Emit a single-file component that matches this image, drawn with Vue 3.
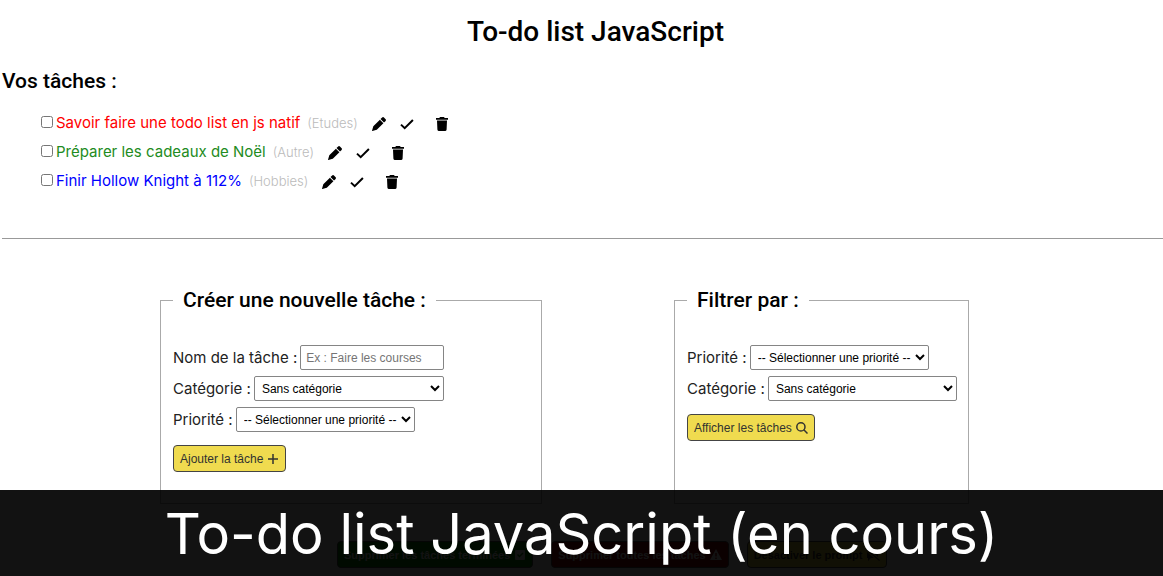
<script setup>
import { ref } from 'vue'

const tasks = ref([
  { id: 1, name: 'Savoir faire une todo list en js natif', category: 'Etudes', level: 'high', done: false },
  { id: 2, name: 'Préparer les cadeaux de Noël', category: 'Autre', level: 'low', done: false },
  { id: 3, name: 'Finir Hollow Knight à 112%', category: 'Hobbies', level: 'medium', done: false }
])
const categories = ['Sans catégorie', 'Etudes', 'Hobbies', 'Autre']
</script>

<template>
  <div class="page">
    <main>
      <h1>To-do list JavaScript</h1>
      <h2>Vos tâches :</h2>
      <ul class="tasks">
        <li v-for="task in tasks" :key="task.id">
          <input :id="'task-' + task.id" v-model="task.done" type="checkbox" />
          <label :for="'task-' + task.id" :class="task.level">{{ task.name }}</label>
          <span class="category">({{ task.category }})</span>
          <button class="icon edit" type="button" aria-label="Modifier">
            <svg viewBox="0 0 14 14"><path d="M9.900.7a1.600 1.600 0 0 1 2.300 0l1.200 1.200a1.600 1.600 0 0 1 0 2.300L12 5.600 8.500 2.100zM7.900 2.700l3.500 3.500-6.600 6.600L.3 14a.3.3 0 0 1-.3-.3l1.300-4.400z" /></svg>
          </button>
          <button class="icon" type="button" aria-label="Terminer">
            <svg viewBox="0 0 14 14"><path class="stroke check" d="M1 7.600 4.700 11.200 12.900 3" /></svg>
          </button>
          <button class="icon trash" type="button" aria-label="Supprimer">
            <svg viewBox="0 0 14 14"><path d="M5 0h4l.7 1H13v1.800H1V1h3.300zM2 3.500h10L11.600 12.500A1.500 1.500 0 0 1 10 14H4a1.500 1.500 0 0 1-1.600-1.500z" /></svg>
          </button>
        </li>
      </ul>
      <hr />
      <div class="forms">
        <form @submit.prevent>
          <fieldset class="create">
            <legend>Créer une nouvelle tâche :</legend>
            <div class="field">
              <label for="name">Nom de la tâche :</label>
              <input id="name" type="text" placeholder="Ex : Faire les courses" />
            </div>
            <div class="field">
              <label for="category">Catégorie :</label>
              <select id="category"><option v-for="c in categories" :key="c">{{ c }}</option></select>
            </div>
            <div class="field">
              <label for="priority">Priorité :</label>
              <select id="priority" class="priority"><option>-- Sélectionner une priorité --</option></select>
            </div>
            <button class="action" type="submit">
              Ajouter la tâche
              <svg viewBox="0 0 12 12"><path class="stroke thin" d="M6 1v10M1 6h10" /></svg>
            </button>
          </fieldset>
        </form>
        <form @submit.prevent>
          <fieldset class="filter">
            <legend>Filtrer par :</legend>
            <div class="field">
              <label for="filter-priority">Priorité :</label>
              <select id="filter-priority" class="priority"><option>-- Sélectionner une priorité --</option></select>
            </div>
            <div class="field">
              <label for="filter-category">Catégorie :</label>
              <select id="filter-category"><option v-for="c in categories" :key="c">{{ c }}</option></select>
            </div>
            <button class="action" type="submit">
              Afficher les tâches
              <svg viewBox="0 0 12 12"><circle class="stroke thin" cx="4.900" cy="4.900" r="4.100" /><path class="stroke thin" d="m7.800 7.800 3.700 3.700" /></svg>
            </button>
          </fieldset>
        </form>
      </div>
      <div class="bulk">
        <button class="action green" type="button">
          Supprimer les tâches terminées
          <svg viewBox="0 0 12 12"><path fill-rule="evenodd" d="M2 1h8a1 1 0 0 1 1 1v8a1 1 0 0 1-1 1H2a1 1 0 0 1-1-1V2a1 1 0 0 1 1-1zM3 6l2.500 2.500L9.500 4.500l-1-1-3 3L4 5z" /></svg>
        </button>
        <button class="action red" type="button">
          Supprimer toutes les tâches
          <svg viewBox="0 0 12 12"><path fill-rule="evenodd" d="M6 0 12 11H0zM5.300 4v3.500h1.400V4zM5.300 8.500v1.400h1.400V8.500z" /></svg>
        </button>
        <button class="action" type="button">
          Désactiver le prompt
          <svg class="wide" viewBox="0 0 14 12"><path d="M1 0 14 11l-.8 1L0 1zM4 1h8v7zM1 3l7 6H5l-3 3V9H1z" /></svg>
        </button>
      </div>
    </main>
    <div class="caption">To-do list JavaScript (en cours)</div>
  </div>
</template>

<style>
body {
  background: #fff;
}
</style>

<style scoped>
.page {
  position: relative;
  height: 100vh;
  overflow: hidden;
  color: #000;
  font: 15px/20px Inter, "Open Sans", sans-serif;
}
main {
  padding-left: 2px;
}
h1,
h2,
legend {
  font-family: Roboto, sans-serif;
  font-weight: 500;
}
h1 {
  margin: 0;
  padding: 15px 0 0 26px;
  font-size: 28px;
  line-height: 34px;
  text-align: center;
}
h2 {
  margin: 19px 0 0;
  font-size: 21px;
  line-height: 26px;
}
.tasks {
  margin: 14px 0 0;
  padding: 0 0 0 39px;
  list-style: none;
}
.tasks li {
  display: flex;
  align-items: center;
  height: 29px;
}
.tasks input {
  width: 12px;
  height: 12px;
  margin: 0 3px 2px 0;
}
.high {
  color: #f00;
}
.low {
  color: #228b22;
}
.medium {
  color: #00f;
}
.category {
  margin-left: 7px;
  color: #bbb;
  font-weight: 300;
  font-size: 13px;
}
.icon {
  display: flex;
  margin: 3px 0 0 14px;
  padding: 0;
  border: 0;
  background: none;
  color: #000;
}
.icon svg {
  width: 14px;
  height: 14px;
}
.trash {
  margin-left: 21px;
}
.stroke {
  fill: none;
  stroke: currentColor;
  stroke-width: 2;
}
.thin {
  stroke-width: 1.5;
}
hr {
  margin: 43px 0 0;
  border: 0;
  border-top: 1px solid #999;
}
.forms {
  display: flex;
  gap: 132px;
  padding: 48px 0 0 158px;
}
form {
  display: flex;
}
fieldset {
  box-sizing: border-box;
  min-height: 217px;
  margin: 0;
  padding: 32px 11px 12px 12px;
  border: 1px solid #aaa;
}
.create {
  width: 382px;
}
.filter {
  width: 295px;
}
legend {
  padding: 0 10px;
  font-size: 21px;
  line-height: 26px;
}
.field {
  display: flex;
  align-items: center;
  gap: 3px;
  height: 25px;
  margin-bottom: 6px;
}
.field label {
  white-space: nowrap;
  color: #222;
}
.create .field {
  width: 271px;
}
.field input,
.field select {
  box-sizing: border-box;
  flex: 1;
  min-width: 0;
  height: 25px;
  border: 1px solid #858585;
  border-radius: 2px;
  background: #fff;
  color: #000;
  font: 12px "Liberation Sans", Arial, sans-serif;
}
.field input {
  padding: 0 5px;
}
.field select {
  padding: 0 0 0 3px;
}
.field .priority {
  flex: 0 0 179px;
}
.action {
  display: flex;
  align-items: center;
  gap: 4px;
  height: 27px;
  margin-top: 13px;
  padding: 0 6px;
  border: 1px solid #444;
  border-radius: 4px;
  background: #f0db4f;
  color: #323330;
  font: 12px "Liberation Sans", Arial, sans-serif;
  white-space: nowrap;
}
.action svg {
  width: 12px;
  height: 12px;
}
.action .wide {
  width: 14px;
}
.action path {
  fill: currentColor;
}
.action .stroke {
  fill: none;
}
.bulk {
  display: flex;
  gap: 18px;
  padding: 24px 0 0 335px;
}
.bulk .action {
  font-size: 11px;
  font-weight: 700;
}
.bulk .green {
  background: #080;
  color: #fff;
}
.bulk .red {
  background: #900;
  color: #fff;
}
.caption {
  position: absolute;
  right: 0;
  bottom: 0;
  left: 0;
  padding-top: 2px;
  background: rgba(0, 0, 0, 0.93);
  color: #fff;
  font-size: 56px;
  line-height: 84px;
  text-align: center;
  white-space: nowrap;
}
</style>
